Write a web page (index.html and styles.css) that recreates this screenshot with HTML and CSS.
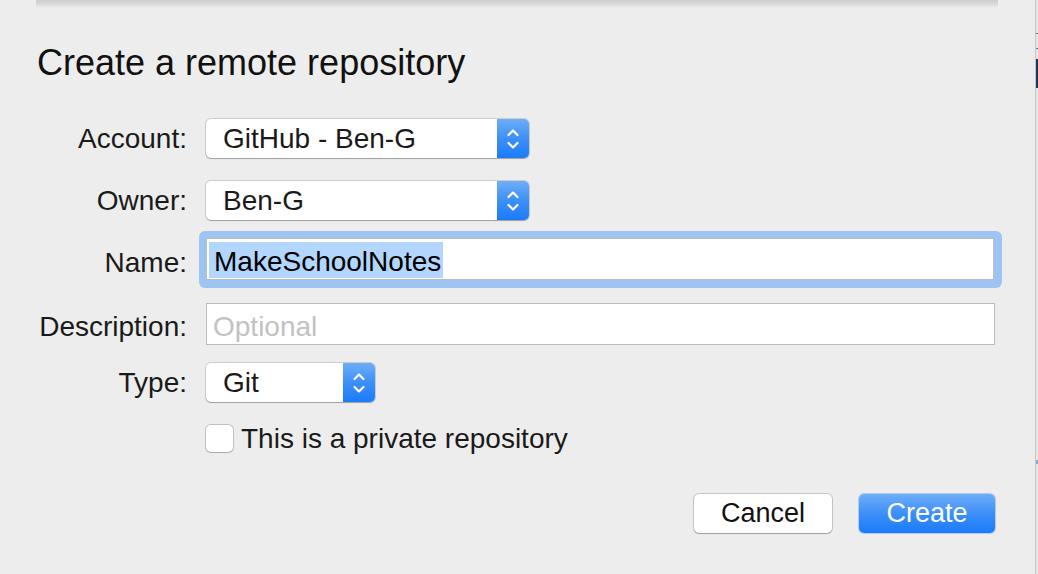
FILE: index.html
```html
<!DOCTYPE html>
<html lang="en">
<head>
<meta charset="utf-8">
<title>Create a remote repository</title>
<link rel="stylesheet" href="styles.css">
</head>
<body>
<div class="page">
  <main class="sheet">
    <div class="top-shadow"></div>
    <h1 class="title">Create a remote repository</h1>
    <form class="form">
      <div class="row row-account">
        <label class="label">Account:</label>
        <div class="popup popup-wide">
          <span class="popup-text">GitHub - Ben-G</span>
          <span class="popup-arrows"><svg width="14" height="24" viewBox="0 0 14 24"><path d="M2.5 8 L7 3.5 L11.5 8 M2.5 16 L7 20.5 L11.5 16" fill="none" stroke="#fff" stroke-width="2.2" stroke-linecap="round" stroke-linejoin="round"/></svg></span>
        </div>
      </div>
      <div class="row row-owner">
        <label class="label">Owner:</label>
        <div class="popup popup-wide">
          <span class="popup-text">Ben-G</span>
          <span class="popup-arrows"><svg width="14" height="24" viewBox="0 0 14 24"><path d="M2.5 8 L7 3.5 L11.5 8 M2.5 16 L7 20.5 L11.5 16" fill="none" stroke="#fff" stroke-width="2.2" stroke-linecap="round" stroke-linejoin="round"/></svg></span>
        </div>
      </div>
      <div class="row row-name text-row">
        <label class="label">Name:</label>
        <div class="focus-ring">
          <div class="field"><span class="selected">MakeSchoolNotes</span></div>
        </div>
      </div>
      <div class="row row-desc text-row">
        <label class="label">Description:</label>
        <div class="field"><span class="placeholder">Optional</span></div>
      </div>
      <div class="row row-type">
        <label class="label">Type:</label>
        <div class="popup popup-narrow">
          <span class="popup-text">Git</span>
          <span class="popup-arrows"><svg width="14" height="24" viewBox="0 0 14 24"><path d="M2.5 8 L7 3.5 L11.5 8 M2.5 16 L7 20.5 L11.5 16" fill="none" stroke="#fff" stroke-width="2.2" stroke-linecap="round" stroke-linejoin="round"/></svg></span>
        </div>
      </div>
      <div class="row row-check">
        <span class="label"></span>
        <div class="check-wrap">
          <span class="checkbox"></span>
          <span class="check-label">This is a private repository</span>
        </div>
      </div>
      <div class="buttons">
        <button type="button" class="btn btn-cancel">Cancel</button>
        <button type="button" class="btn btn-create">Create</button>
      </div>
    </form>
  </main>
  <aside class="edge">
    <span class="edge-line edge-l1"></span>
    <span class="edge-line edge-l2"></span>
    <span class="edge-block"></span>
    <span class="edge-blue"></span>
  </aside>
</div>
</body>
</html>
```

FILE: styles.css
```css
* { box-sizing: border-box; }

html, body {
  margin: 0;
  padding: 0;
  background: #ededed;
}

body {
  font-family: "Liberation Sans", Arial, sans-serif;
  color: #111;
  width: 1038px;
  height: 574px;
  overflow: hidden;
}

.page {
  display: flex;
  width: 1038px;
  height: 574px;
}

.sheet {
  flex: 1;
  background: #ededed;
}

.top-shadow {
  height: 8px;
  margin: 0 37px 0 36px;
  background: linear-gradient(#cdcdcd, #d7d7d7 45%, #ededed);
}

.title {
  margin: 37px 0 0 37px;
  font-size: 36px;
  line-height: 36px;
  font-weight: normal;
  color: #111;
}

.form {
  width: 995px;
  margin-top: 38px;
  display: flex;
  flex-direction: column;
}

.row {
  display: grid;
  grid-template-columns: 187px 1fr;
  column-gap: 19px;
  align-items: center;
  justify-items: start;
}

.label {
  justify-self: end;
  font-size: 28px;
  line-height: 32px;
  color: #1a1a1a;
  white-space: nowrap;
}

.row-owner { margin-top: 23px; }
.row-name { margin-top: 18px; }
.row-desc { margin-top: 22px; }
.row-type { margin-top: 18px; }
.row-check { margin-top: 23px; }

.text-row .label { padding-top: 6px; }
.row-check .label { line-height: 27px; }

/* popup buttons */
.popup {
  display: flex;
  align-items: center;
  height: 39px;
  background: #fff;
  border-radius: 5px;
  box-shadow: 0 0 0 1px rgba(0, 0, 0, 0.13), 0 1px 1px rgba(0, 0, 0, 0.22);
  overflow: hidden;
}

.popup-wide { width: 323px; }
.popup-narrow { width: 169px; }

.popup-text {
  flex: 1;
  padding-left: 17px;
  font-size: 28px;
  color: #1a1a1a;
  white-space: nowrap;
}

.popup-arrows {
  width: 32px;
  height: 100%;
  display: flex;
  align-items: center;
  justify-content: center;
  background: linear-gradient(#6eaef8, #3d8ff8 50%, #1a7bfa);
}

/* text fields */
.focus-ring {
  margin: -7px;
  padding: 7px 8px 8px 7px;
  background: #9dc4f2;
  border-radius: 6px;
  justify-self: stretch;
}

.field {
  width: 100%;
  height: 42px;
  background: #fff;
  border: 1px solid #bcbcbc;
  display: flex;
  align-items: center;
  padding-left: 2px;
  font-size: 28px;
}

.row-desc .field { justify-self: stretch; padding-left: 6px; }

.selected {
  display: inline-block;
  background: #b3d6fe;
  color: #000;
  height: 36px;
  padding: 4px 2px 0 5px;
  margin-top: 2px;
  line-height: 32px;
}

.placeholder {
  color: #c2c2c2;
  padding-top: 6px;
}

/* checkbox */
.check-wrap {
  display: flex;
  align-items: center;
  gap: 8px;
  height: 27px;
}

.checkbox {
  width: 27px;
  height: 27px;
  background: #fff;
  border-radius: 5px;
  box-shadow: 0 0 0 1px rgba(0, 0, 0, 0.18), 0 1px 1px rgba(0, 0, 0, 0.12);
}

.check-label {
  font-size: 28px;
  line-height: 27px;
  color: #1a1a1a;
}

/* buttons */
.buttons {
  margin-top: 42px;
  display: flex;
  justify-content: flex-end;
  gap: 27px;
}

.btn {
  height: 39px;
  border: none;
  border-radius: 5px;
  font-family: "Liberation Sans", Arial, sans-serif;
  font-size: 27px;
  line-height: 39px;
  padding: 0;
}

.btn-cancel {
  width: 138px;
  background: #fff;
  color: #111;
  box-shadow: 0 0 0 1px rgba(0, 0, 0, 0.16), 0 1px 1px rgba(0, 0, 0, 0.2);
}

.btn-create {
  width: 136px;
  color: #fff;
  background: linear-gradient(#6eaef8, #3d8ff8 50%, #1a7bfa);
  box-shadow: 0 0 0 1px rgba(20, 100, 220, 0.25);
}

/* right window edge */
.edge {
  width: 3px;
  border-left: 1px solid #c6c6c6;
  background: #e6e6e6;
  display: flex;
  flex-direction: column;
}

.edge-line {
  display: block;
  height: 1px;
  background: #6b7688;
}

.edge-l1 { margin-top: 33px; }
.edge-l2 { margin-top: 14px; }

.edge-block {
  display: block;
  margin-top: 10px;
  height: 29px;
  background: #1e3558;
}

.edge-blue {
  display: block;
  margin-top: 372px;
  height: 4px;
  background: #8eaacc;
}
```
